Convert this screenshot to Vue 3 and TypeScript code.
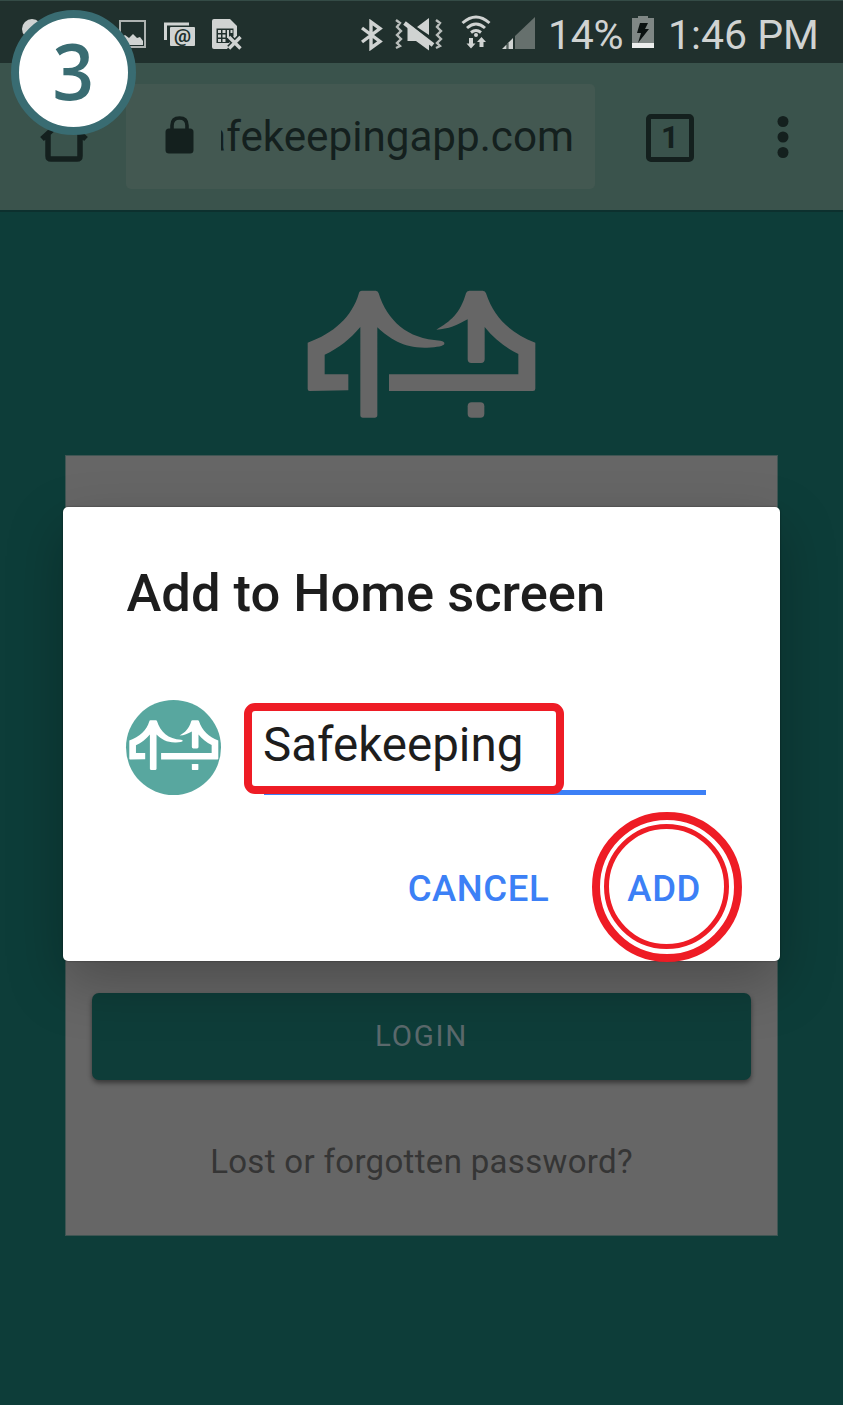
<script setup lang="ts">
import { ref } from 'vue'

const title = ref<string>('Safekeeping')
const page: string = 'safekeepingapp.com'
const towerLeft =
  'M205 72Q207 62 215 62H256Q263 62 265 70C290 150 350 208 450 212Q464 214 462 222Q458 231 410 233C340 235 300 208 261 172V435Q261 443 253 443H218Q210 443 210 435V171C180 207 145 235 103 254V313H174V361L58 363Q52 363 52 357V218C130 190 185 140 205 72Z'
const towerRight =
  'M527 70Q529 62 537 62H577Q585 62 587 70C612 145 660 188 735 218V356Q735 363 728 363H296V313H684V252C645 233 612 207 583 171V268Q583 279 572 279H543Q532 279 532 268V148C500 165 475 178 438 179C480 155 510 130 527 70Z'
</script>

<template>
  <div class="screen">
    <header class="status">
      <svg class="i-dot" width="20" height="20" viewBox="0 0 20 20"><circle cx="10" cy="10" r="10" /></svg>
      <svg class="i-photo" width="27" height="28" viewBox="0 0 27 28">
        <rect x="1" y="1" width="25" height="26" fill="none" stroke="#aeb3b1" stroke-width="2" />
        <path d="M3 22V17L6 15L10 18L14 14L18 18L21 17L24 21V25H3Z" />
      </svg>
      <svg class="i-mail" width="32" height="25" viewBox="0 0 32 25">
        <path d="M1.500 18V2H25" fill="none" stroke="#d0d3d2" stroke-width="3" />
        <rect x="6" y="5" width="25" height="19" rx="1" />
        <text x="18.500" y="19.500" text-anchor="middle" class="at">@</text>
      </svg>
      <svg class="i-sim" width="31" height="32" viewBox="0 0 31 32">
        <path d="M2 1H18L25 8V18L15 31H2Q0 31 0 29V3Q0 1 2 1Z" />
        <path d="M4.500 10.500H21.500V18L17 25H4.500Z" fill="#20302d" />
        <path d="M6 12h3v3h-3zM6 16.500h3v3h-3zM6 21h3v3h-3zM10.500 12h3v3h-3zM10.500 16.500h3v3h-3zM10.500 21h3v3h-3zM15 12h2v8h-2zM18.500 12h2v3h-2z" />
        <path d="M17.500 19.500L28 30M28 19.500L17.500 30" stroke="#20302d" stroke-width="6.500" />
        <path d="M17 19L28.500 30.500M28.500 19L17 30.500" stroke="#d0d3d2" stroke-width="3.400" />
      </svg>
      <svg class="i-bt" width="22" height="32" viewBox="0 0 22 32">
        <path d="M1 9L19 22.500L10 29V3L19 9.500L1 23" fill="none" stroke="#d0d3d2" stroke-width="3.400" />
      </svg>
      <svg class="i-mute" width="48" height="34" viewBox="0 0 48 34">
        <path d="M1 3L5 6L2 10L6 14L2 18L6 22L2 26L5 29L1 31M41 3L45 6L42 10L46 14L42 18L46 22L42 26L45 29L41 31" fill="none" stroke="#b8bdbb" stroke-width="2.400" />
        <path d="M34 1V18L22 10ZM12.500 8H15L34 23V33.500L21 24H12.500Z" />
        <path d="M9.500 6L38 28" stroke="#d0d3d2" stroke-width="4.200" />
      </svg>
      <svg class="i-wifi" width="30" height="34" viewBox="0 0 30 34">
        <g fill="none" stroke="#d0d3d2" stroke-width="3">
          <path d="M1.500 8Q15 -4 28.500 8" /><path d="M6 13Q15 5 24 13" /><path d="M10 17.500Q15 13.500 20 17.500" />
        </g>
        <circle cx="15" cy="20" r="2" />
        <path d="M8 23H12V28.500H14.500L10 33.500L5.500 28.500H8ZM18.500 32H22.500V27H25L20.500 22L16 27H18.500Z" />
      </svg>
      <svg class="i-signal" width="33" height="32" viewBox="0 0 33 32">
        <path d="M13 32V19L33 0V32Z" fill="#66706d" />
        <path d="M0 32L4.500 27.500V32ZM6 32V26L11 21V32Z" />
        <path d="M6 32V26" stroke="#66706d" stroke-width="1.500" />
      </svg>
      <span class="percent">14%</span>
      <svg class="i-battery" width="22" height="32" viewBox="0 0 22 32">
        <path d="M6 0H16V2H22V27H0V2H6Z" fill="#7f8785" />
        <rect y="27" width="22" height="5" fill="#eceeed" />
        <path d="M8 7H16L13 13H17L6 27L9 17H5Z" fill="#0b1211" />
      </svg>
      <span class="clock">1:46 PM</span>
    </header>

    <nav class="toolbar">
      <svg class="home" width="48" height="46" viewBox="0 0 48 46">
        <path d="M2 23L24 3L46 23M8 18V40Q8 43 11 43H37Q40 43 40 40V18" fill="none" stroke="#14201e" stroke-width="5.500" />
      </svg>
      <div class="address">
        <svg width="29" height="38" viewBox="0 0 29 38">
          <path d="M7 14V9.500Q7 2 14.500 2T22 9.500V14" fill="none" stroke="#14201e" stroke-width="3.600" />
          <rect x=".5" y="12.500" width="28" height="25" rx="3.500" fill="#14201e" />
        </svg>
        <div class="url"><span>{{ page }}</span></div>
      </div>
      <div class="tabs">1</div>
      <svg class="more" width="12" height="42" viewBox="0 0 12 42">
        <circle cx="6" cy="5.500" r="5.500" /><circle cx="6" cy="21" r="5.500" /><circle cx="6" cy="36.500" r="5.500" />
      </svg>
    </nav>

    <main class="site">
      <svg class="logo" width="230" height="128.700" viewBox="50 60 690 386">
        <path :d="towerLeft" /><path :d="towerRight" /><rect x="532" y="397" width="50" height="46" rx="12" />
      </svg>
      <section class="card">
        <button class="login">LOGIN</button>
        <p class="lost">Lost or forgotten password?</p>
      </section>
    </main>

    <div class="dialog">
      <h1>Add to Home screen</h1>
      <div class="entry">
        <div class="avatar">
          <svg width="90" height="50.300" viewBox="50 60 690 386">
            <path :d="towerLeft" /><path :d="towerRight" /><rect x="532" y="397" width="50" height="46" rx="5" />
          </svg>
        </div>
        <div class="field">{{ title }}</div>
      </div>
      <div class="actions">
        <span>CANCEL</span>
        <span>ADD</span>
      </div>
      <div class="mark-box"></div>
      <div class="mark-ring"><i></i></div>
    </div>

    <div class="step"><span>3</span></div>
  </div>
</template>

<style>
body {
  margin: 0;
}
</style>

<style scoped>
.screen {
  position: relative;
  width: 843px;
  height: 1405px;
  overflow: hidden;
  background: #0d3d39;
  font-family: Roboto, "Liberation Sans", sans-serif;
}
svg {
  display: block;
  flex: none;
}
.status {
  display: flex;
  align-items: flex-start;
  box-sizing: border-box;
  height: 63px;
  border-top: 1px solid #344b46;
  background: #20302d;
  fill: #d0d3d2;
  color: #d0d3d2;
  font-size: 41px;
  line-height: 48px;
  white-space: nowrap;
}
.i-dot { margin: 18px 0 0 22px; }
.i-photo { margin: 19px 0 0 77px; }
.i-mail { margin: 21px 0 0 18px; }
.i-sim { margin: 17px 0 0 16px; }
.i-bt { margin: 18px 0 0 118px; }
.i-mute { margin: 16px 0 0 12px; }
.i-wifi { margin: 14px 0 0 18px; }
.i-signal { margin: 16px 0 0 11px; }
.i-battery { margin: 15px 0 0 7px; }
.at {
  font: 700 19px Roboto, sans-serif;
  fill: #20302d;
}
.percent {
  width: 77px;
  margin: 10px 0 0 13px;
  letter-spacing: -.300px;
}
.clock { margin: 10px 0 0 14px; }
.toolbar {
  display: flex;
  align-items: flex-start;
  box-sizing: border-box;
  height: 149px;
  border-bottom: 2px solid #0c302e;
  background: #3a534c;
}
.home { margin: 53px 0 0 40px; }
.address {
  display: flex;
  box-sizing: border-box;
  width: 469px;
  height: 105px;
  margin: 21px 0 0 38px;
  padding: 32px 0 0 39px;
  border-radius: 5px;
  background: #435851;
}
.url {
  display: flex;
  justify-content: flex-end;
  width: 353px;
  height: 56px;
  margin: -4px 0 0 27px;
  overflow: hidden;
  color: #14201e;
  font-size: 42.200px;
  line-height: 50px;
}
.tabs {
  box-sizing: border-box;
  width: 48px;
  height: 48px;
  margin: 51px 0 0 51px;
  border: 5px solid #14201e;
  border-radius: 5px;
  color: #14201e;
  font-size: 31px;
  font-weight: 700;
  line-height: 37px;
  text-align: center;
}
.more {
  margin: 53px 0 0 83px;
  fill: #14201e;
}
.site {
  display: flex;
  flex-direction: column;
  align-items: center;
  padding-top: 78px;
}
.logo {
  fill: #666;
}
.card {
  display: flex;
  flex-direction: column;
  align-items: center;
  box-sizing: border-box;
  width: 713px;
  height: 781px;
  margin-top: 36.300px;
  padding-top: 537px;
  border: 1px solid #3f5553;
  background: #666;
}
.login {
  width: 659px;
  height: 87px;
  padding: 0;
  border: 0;
  border-radius: 7px;
  background: #0e3d39;
  box-shadow: 0 3px 5px rgba(0, 0, 0, .45);
  color: #5b696c;
  font: 400 29.500px Roboto, sans-serif;
  letter-spacing: 1.700px;
}
.lost {
  margin: 62px 0 0;
  color: #353535;
  font-size: 33px;
  line-height: 40px;
  letter-spacing: .320px;
}
.dialog {
  position: absolute;
  top: 507px;
  left: 63px;
  box-sizing: border-box;
  width: 717px;
  height: 454px;
  padding: 54px 64px 0;
  border-radius: 5px;
  background: #fff;
  box-shadow: 0 22px 55px rgba(0, 0, 0, .25), 0 0 2px rgba(0, 0, 0, .5);
}
h1 {
  margin: 0;
  color: #1d1d1d;
  font-size: 52.500px;
  font-weight: 500;
  line-height: 64px;
  text-indent: -.500px;
  white-space: nowrap;
}
.entry {
  display: flex;
  margin-top: 75px;
}
.avatar {
  display: flex;
  justify-content: center;
  box-sizing: border-box;
  width: 95px;
  height: 95px;
  margin-left: -1px;
  padding-top: 20px;
  border-radius: 50%;
  background: #58a79f;
  fill: #fff;
}
.field {
  box-sizing: border-box;
  width: 442px;
  height: 95px;
  margin-left: 43px;
  padding-top: 17px;
  border-bottom: 5px solid #3c80f6;
  color: #1d1d1d;
  font-size: 47.500px;
  line-height: 56px;
  text-indent: -1px;
}
.actions {
  display: flex;
  justify-content: flex-end;
  gap: 78px;
  margin: 72px 15px 0 0;
  color: #3c80f6;
  font-size: 36.500px;
  font-weight: 500;
  line-height: 44px;
  letter-spacing: .600px;
}
.mark-box {
  position: absolute;
  top: 196px;
  left: 181px;
  box-sizing: border-box;
  width: 320px;
  height: 91px;
  border: 8px solid #ee1c25;
  border-radius: 11px;
}
.mark-ring {
  position: absolute;
  top: 305px;
  left: 529px;
  box-sizing: border-box;
  width: 150px;
  height: 150px;
  padding: 4px;
  border: 8px solid #ee1c25;
  border-radius: 50%;
}
.mark-ring i {
  display: block;
  box-sizing: border-box;
  width: 125px;
  height: 125px;
  border: 5px solid #ee1c25;
  border-radius: 50%;
}
.step {
  position: absolute;
  top: 10px;
  left: 11px;
  display: flex;
  justify-content: center;
  box-sizing: border-box;
  width: 125px;
  height: 125px;
  border: 8px solid #396c72;
  border-radius: 50%;
  background: #fff;
  color: #396c72;
  font: 600 78px/105px "Open Sans", sans-serif;
}
.step span {
  transform: scaleX(.93);
}
</style>
